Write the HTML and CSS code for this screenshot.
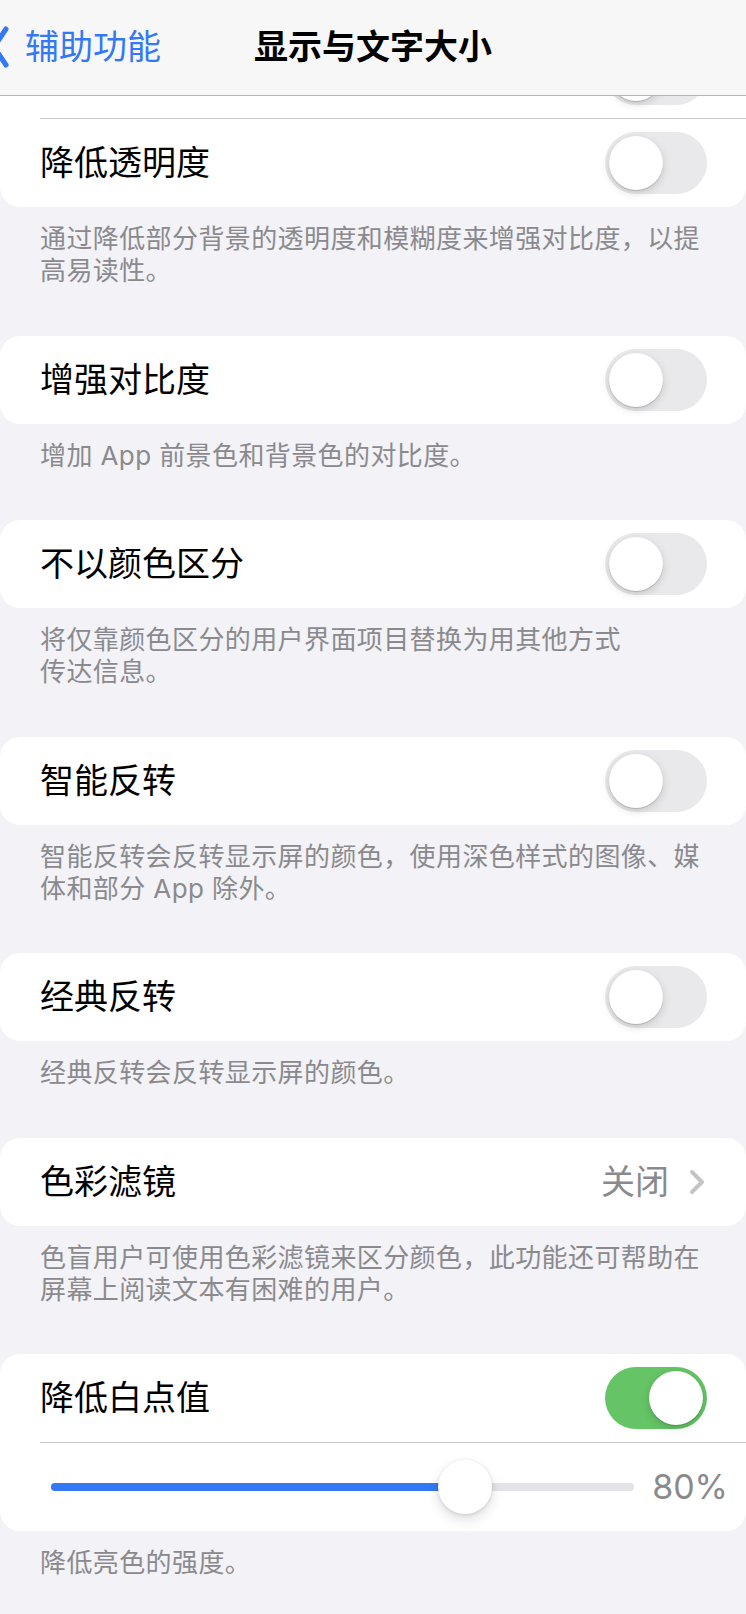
FILE: index.html
```html
<!DOCTYPE html>
<html lang="zh-CN">
<head>
    <meta charset="UTF-8">
    <meta name="viewport" content="width=device-width, initial-scale=1.0">
    <title>显示与文字大小</title>
    <link rel="stylesheet" href="styles.css">
</head>
<body>
    <header class="navbar">
        <a class="back" href="#">
            <svg class="back-icon" width="20" height="44" viewBox="0 0 20 44">
                <path d="M15 4 L3 22 L15 40" fill="none" stroke="#3478f6" stroke-width="5" stroke-linecap="round" stroke-linejoin="round"/>
            </svg>
            <span>辅助功能</span>
        </a>
        <h1 class="title">显示与文字大小</h1>
        <span></span>
    </header>

    <main class="page">
        <section class="card">
            <!-- row scrolled under the nav bar, only its switch peeks out -->
            <div class="cell">
                <div class="cell-body">
                    <span class="label"></span>
                    <span class="switch"><span class="knob"></span></span>
                </div>
            </div>
            <div class="cell">
                <div class="cell-body">
                    <span class="label">降低透明度</span>
                    <span class="switch"><span class="knob"></span></span>
                </div>
            </div>
        </section>
        <p class="footer">通过降低部分背景的透明度和模糊度来增强对比度，以提高易读性。</p>

        <section class="card">
            <div class="cell">
                <div class="cell-body">
                    <span class="label">增强对比度</span>
                    <span class="switch"><span class="knob"></span></span>
                </div>
            </div>
        </section>
        <p class="footer">增加 App 前景色和背景色的对比度。</p>

        <section class="card">
            <div class="cell">
                <div class="cell-body">
                    <span class="label">不以颜色区分</span>
                    <span class="switch"><span class="knob"></span></span>
                </div>
            </div>
        </section>
        <p class="footer">将仅靠颜色区分的用户界面项目替换为用其他方式<br>传达信息。</p>

        <section class="card">
            <div class="cell">
                <div class="cell-body">
                    <span class="label">智能反转</span>
                    <span class="switch"><span class="knob"></span></span>
                </div>
            </div>
        </section>
        <p class="footer">智能反转会反转显示屏的颜色，使用深色样式的图像、媒体和部分 App 除外。</p>

        <section class="card">
            <div class="cell">
                <div class="cell-body">
                    <span class="label">经典反转</span>
                    <span class="switch"><span class="knob"></span></span>
                </div>
            </div>
        </section>
        <p class="footer">经典反转会反转显示屏的颜色。</p>

        <section class="card">
            <div class="cell">
                <div class="cell-body link">
                    <span class="label">色彩滤镜</span>
                    <span class="detail">
                        关闭
                        <svg class="chevron" width="16" height="26" viewBox="0 0 16 26">
                            <path d="M3 3 L13 13 L3 23" fill="none" stroke="#c4c4c7" stroke-width="4" stroke-linecap="round" stroke-linejoin="round"/>
                        </svg>
                    </span>
                </div>
            </div>
        </section>
        <p class="footer">色盲用户可使用色彩滤镜来区分颜色，此功能还可帮助在屏幕上阅读文本有困难的用户。</p>

        <section class="card">
            <div class="cell">
                <div class="cell-body">
                    <span class="label">降低白点值</span>
                    <span class="switch on"><span class="knob"></span></span>
                </div>
            </div>
            <div class="cell">
                <div class="cell-body slider-row">
                    <div class="slider">
                        <div class="track"><div class="fill" style="width: 71%"></div></div>
                        <div class="thumb" style="left: 71%"></div>
                    </div>
                    <span class="value">80%</span>
                </div>
            </div>
        </section>
        <p class="footer">降低亮色的强度。</p>
    </main>
</body>
</html>
```

FILE: styles.css
```css
body {
    margin: 0;
    background: #f2f2f7;
    font-family: "Inter", "Noto Sans CJK SC", sans-serif;
    color: #000;
    overflow: hidden;
}
.navbar {
    position: fixed;
    top: 0;
    left: 0;
    right: 0;
    z-index: 10;
    height: 95px;
    display: grid;
    grid-template-columns: 1fr auto 1fr;
    align-items: center;
    background: #f7f7f7;
    border-bottom: 1px solid #b4b4b6;
}
.back {
    display: flex;
    align-items: center;
    color: #3478f6;
    text-decoration: none;
    font-size: 34px;
    line-height: 40px;
    margin-top: -2px;
}
.back-icon {
    margin-left: -9px;
    margin-right: 14px;
}
.title {
    margin: 0;
    font-size: 34px;
    font-weight: 600;
    line-height: 40px;
    margin-top: -2px;
}
.page {
    padding-top: 30px;
}
.card {
    background: white;
    border-radius: 20px;
}
.cell {
    padding-left: 40px;
}
.cell + .cell .cell-body {
    border-top: 1px solid #c8c7cc;
}
.cell-body {
    height: 88px;
    display: flex;
    align-items: center;
    justify-content: space-between;
    padding-right: 39px;
}
.label {
    font-size: 34px;
    line-height: 40px;
}
.switch {
    width: 102px;
    height: 62px;
    box-sizing: border-box;
    padding: 4px;
    border-radius: 31px;
    background: #e9e9eb;
    display: flex;
    align-items: center;
}
.switch.on {
    background: #65c466;
    justify-content: flex-end;
}
.knob {
    width: 54px;
    height: 54px;
    border-radius: 50%;
    background: white;
    box-shadow: 0 3px 8px rgba(0,0,0,0.15), 0 1px 1px rgba(0,0,0,0.16);
}
.link {
    padding-right: 41px;
}
.detail {
    display: flex;
    align-items: center;
    gap: 20px;
    color: #8a8a8e;
    font-size: 34px;
    line-height: 40px;
}
.footer {
    margin: 0;
    padding: 16px 40px 48.5px 40px;
    font-size: 26px;
    line-height: 32px;
    letter-spacing: 0.4px;
    color: #8a8a8e;
}
.slider-row {
    padding-left: 11px;
    padding-right: 18px;
    gap: 18px;
}
.slider {
    position: relative;
    flex: 1;
    height: 54px;
    display: flex;
    align-items: center;
}
.track {
    flex: 1;
    height: 8px;
    border-radius: 4px;
    background: #e3e3e8;
    overflow: hidden;
}
.fill {
    height: 100%;
    background: #3478f6;
}
.thumb {
    position: absolute;
    top: 0;
    width: 54px;
    height: 54px;
    margin-left: -27px;
    border-radius: 50%;
    background: white;
    box-shadow: 0 6px 13px rgba(0,0,0,0.12), 0 1px 4px rgba(0,0,0,0.12);
}
.value {
    font-size: 34px;
    line-height: 40px;
    color: #8a8a8e;
}
```
